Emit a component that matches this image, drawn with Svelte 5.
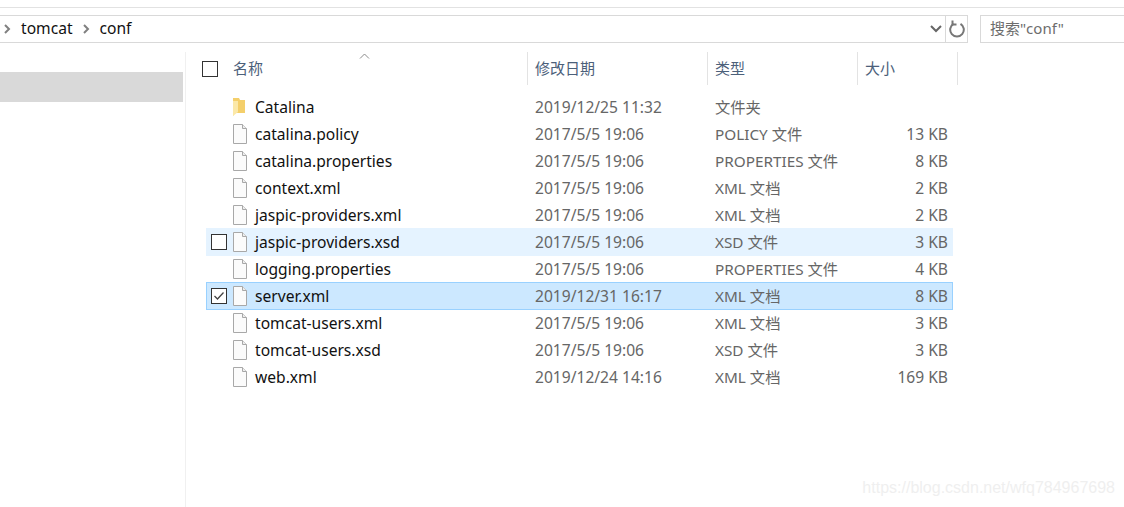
<script>
  const files = [
    { name: 'Catalina', date: '2019/12/25 11:32', type: '文件夹', size: '', folder: true },
    { name: 'catalina.policy', date: '2017/5/5 19:06', type: 'POLICY 文件', size: '13 KB' },
    { name: 'catalina.properties', date: '2017/5/5 19:06', type: 'PROPERTIES 文件', size: '8 KB' },
    { name: 'context.xml', date: '2017/5/5 19:06', type: 'XML 文档', size: '2 KB' },
    { name: 'jaspic-providers.xml', date: '2017/5/5 19:06', type: 'XML 文档', size: '2 KB' },
    { name: 'jaspic-providers.xsd', date: '2017/5/5 19:06', type: 'XSD 文件', size: '3 KB', state: 'hover' },
    { name: 'logging.properties', date: '2017/5/5 19:06', type: 'PROPERTIES 文件', size: '4 KB' },
    { name: 'server.xml', date: '2019/12/31 16:17', type: 'XML 文档', size: '8 KB', state: 'selected' },
    { name: 'tomcat-users.xml', date: '2017/5/5 19:06', type: 'XML 文档', size: '3 KB' },
    { name: 'tomcat-users.xsd', date: '2017/5/5 19:06', type: 'XSD 文件', size: '3 KB' },
    { name: 'web.xml', date: '2019/12/24 14:16', type: 'XML 文档', size: '169 KB' }
  ];
</script>

<div class="window">
  <div class="topline"></div>
  <div class="toolbar">
    <div class="address">
      <svg class="chev" width="8" height="10" viewBox="0 0 8 10"><path d="M2 1l4 4-4 4" /></svg>
      <span class="crumb">tomcat</span>
      <svg class="chev" width="8" height="10" viewBox="0 0 8 10"><path d="M2 1l4 4-4 4" /></svg>
      <span class="crumb">conf</span>
      <svg class="down" width="14" height="10" viewBox="0 0 14 10"><path d="M2 2l5 5 5-5" /></svg>
      <div class="refresh">
        <svg width="16" height="18" viewBox="0 0 16 18"><path d="M4.500 3.800a6.800 6.800 0 1 0 7 0" /><path d="M3.500 .5v4h4" /></svg>
      </div>
    </div>
    <div class="search">搜索"conf"</div>
  </div>

  <div class="main">
    <aside class="nav"><div class="nav-item"></div></aside>
    <section class="list">
      <div class="head">
        <span class="box head-box"></span>
        <div class="col c-name">名称
          <svg class="sort" width="11" height="6" viewBox="0 0 11 6"><path d="M1 5.500l4.500-4.500 4.500 4.500" /></svg>
        </div>
        <div class="col c-date">修改日期</div>
        <div class="col c-type">类型</div>
        <div class="col c-size">大小</div>
      </div>
      <div class="rows">
        {#each files as f}
          <div class="row {f.state ?? ''}">
            <span class="check">
              {#if f.state}
                <span class="box">
                  {#if f.state === 'selected'}
                    <svg width="14" height="14" viewBox="0 0 14 14"><path d="M2.500 7l3 3 6-6.500" /></svg>
                  {/if}
                </span>
              {/if}
            </span>
            <span class="icon">
              {#if f.folder}
                <svg width="14" height="20" viewBox="0 0 14 20">
                  <path d="M1 1h6l1 2h5v13H3l-2 3z" fill="#f4cf6b" />
                  <path d="M1 4h5v11l-5 4z" fill="#fbe8a8" />
                </svg>
              {:else}
                <svg width="16" height="20" viewBox="0 0 16 20">
                  <path d="M1.500.5h9l4 4v15h-13z" fill="#fbfbfb" stroke="#a8a8a8" />
                  <path d="M10.500.5v4h4" fill="#eee" stroke="#a8a8a8" />
                </svg>
              {/if}
            </span>
            <span class="name">{f.name}</span>
            <span class="date">{f.date}</span>
            <span class="type">{f.type}</span>
            <span class="size">{f.size}</span>
          </div>
        {/each}
      </div>
    </section>
  </div>
  <div class="mark">https://blog.csdn.net/wfq784967698</div>
</div>

<style>
  :global(body) {
    margin: 0;
    background: #fff;
  }

  .window {
    position: relative;
    width: 1124px;
    height: 507px;
    overflow: hidden;
    font-family: "Noto Sans", "Noto Sans CJK SC", sans-serif;
    font-size: 15.6px;
    color: #111;
    background: #fff;
  }

  .topline {
    height: 1px;
    margin-top: 7px;
    background: #e2e2e2;
  }

  .toolbar {
    display: flex;
    gap: 12px;
    margin-top: 7px;
    height: 28px;
  }

  .address {
    display: flex;
    align-items: center;
    width: 968px;
    box-sizing: border-box;
    padding-left: 1px;
    border: solid #d9d9d9;
    border-width: 1px 1px 1px 0;
  }

  .chev {
    fill: none;
    stroke: #808080;
    stroke-width: 2;
    margin-left: 2px;
  }

  .crumb {
    margin: 0 7px 0 10px;
    padding-bottom: 2px;
  }

  .down {
    margin-left: auto;
    margin-right: 2px;
    fill: none;
    stroke: #666;
    stroke-width: 2;
  }

  .refresh {
    display: flex;
    align-items: center;
    justify-content: center;
    width: 21px;
    height: 100%;
    border-left: 1px solid #d9d9d9;
  }

  .refresh svg {
    fill: none;
    stroke: #777;
    stroke-width: 2;
  }

  .search {
    flex: 1;
    box-sizing: border-box;
    border: 1px solid #d9d9d9;
    border-right: 0;
    padding: 1px 0 0 9px;
    color: #6d6d6d;
    font-size: 15px;
  }

  .main {
    display: flex;
    margin-top: 9px;
    height: 456px;
  }

  .nav {
    box-sizing: border-box;
    width: 186px;
    padding: 20px 2px 0 0;
    border-right: 1px solid #f0f0f0;
  }

  .nav-item {
    height: 30px;
    background: #d9d9d9;
  }

  .list {
    flex: 1;
    min-width: 0;
  }

  .head {
    display: flex;
    align-items: stretch;
    height: 33px;
    color: #4c607a;
    font-size: 15px;
  }

  .box {
    display: flex;
    align-items: center;
    justify-content: center;
    box-sizing: border-box;
    width: 16px;
    height: 16px;
    border: 1px solid #333;
    background: #fff;
  }

  .box svg {
    fill: none;
    stroke: #444;
    stroke-width: 1.300;
  }

  .head-box {
    align-self: center;
    margin-left: 16px;
    margin-right: 15px;
  }

  .col {
    box-sizing: border-box;
    display: flex;
    align-items: center;
    padding-left: 7px;
    padding-bottom: 3px;
    border-left: 1px solid #e3e3e3;
  }

  .c-name {
    position: relative;
    width: 294px;
    border-left: 0;
    padding-left: 0;
  }

  .sort {
    position: absolute;
    left: 126px;
    top: 1px;
    fill: none;
    stroke: #8a8a8a;
  }

  .c-date {
    width: 180px;
  }

  .c-type {
    width: 150px;
  }

  .c-size {
    width: 101px;
    border-right: 1px solid #e3e3e3;
  }

  .rows {
    display: flex;
    flex-direction: column;
    margin: 8px 0 0 20px;
    width: 747px;
  }

  .row {
    display: flex;
    align-items: center;
    box-sizing: border-box;
    height: 28px;
    margin-bottom: -1px;
    border: 1px solid transparent;
  }

  .row.hover {
    background: #e5f3ff;
    border-color: #e5f3ff;
  }

  .row.selected {
    background: #cce8ff;
    border-color: #99d1ff;
    z-index: 1;
  }

  .check {
    width: 25px;
    padding-left: 4px;
    box-sizing: border-box;
    flex: none;
  }

  .icon {
    display: flex;
    width: 23px;
    flex: none;
  }

  .name {
    width: 280px;
    flex: none;
    padding-bottom: 1px;
  }

  .date,
  .size {
    color: #666;
    padding-bottom: 1px;
  }

  .date {
    width: 180px;
    flex: none;
  }

  .type {
    width: 140px;
    flex: none;
    color: #666;
    font-size: 15.3px;
    padding-bottom: 3px;
  }

  .size {
    flex: 1;
    text-align: right;
    padding-right: 4px;
  }

  .mark {
    position: absolute;
    right: 9px;
    top: 479px;
    font-family: "Liberation Sans", sans-serif;
    font-size: 16px;
    color: #efefef;
  }
</style>
